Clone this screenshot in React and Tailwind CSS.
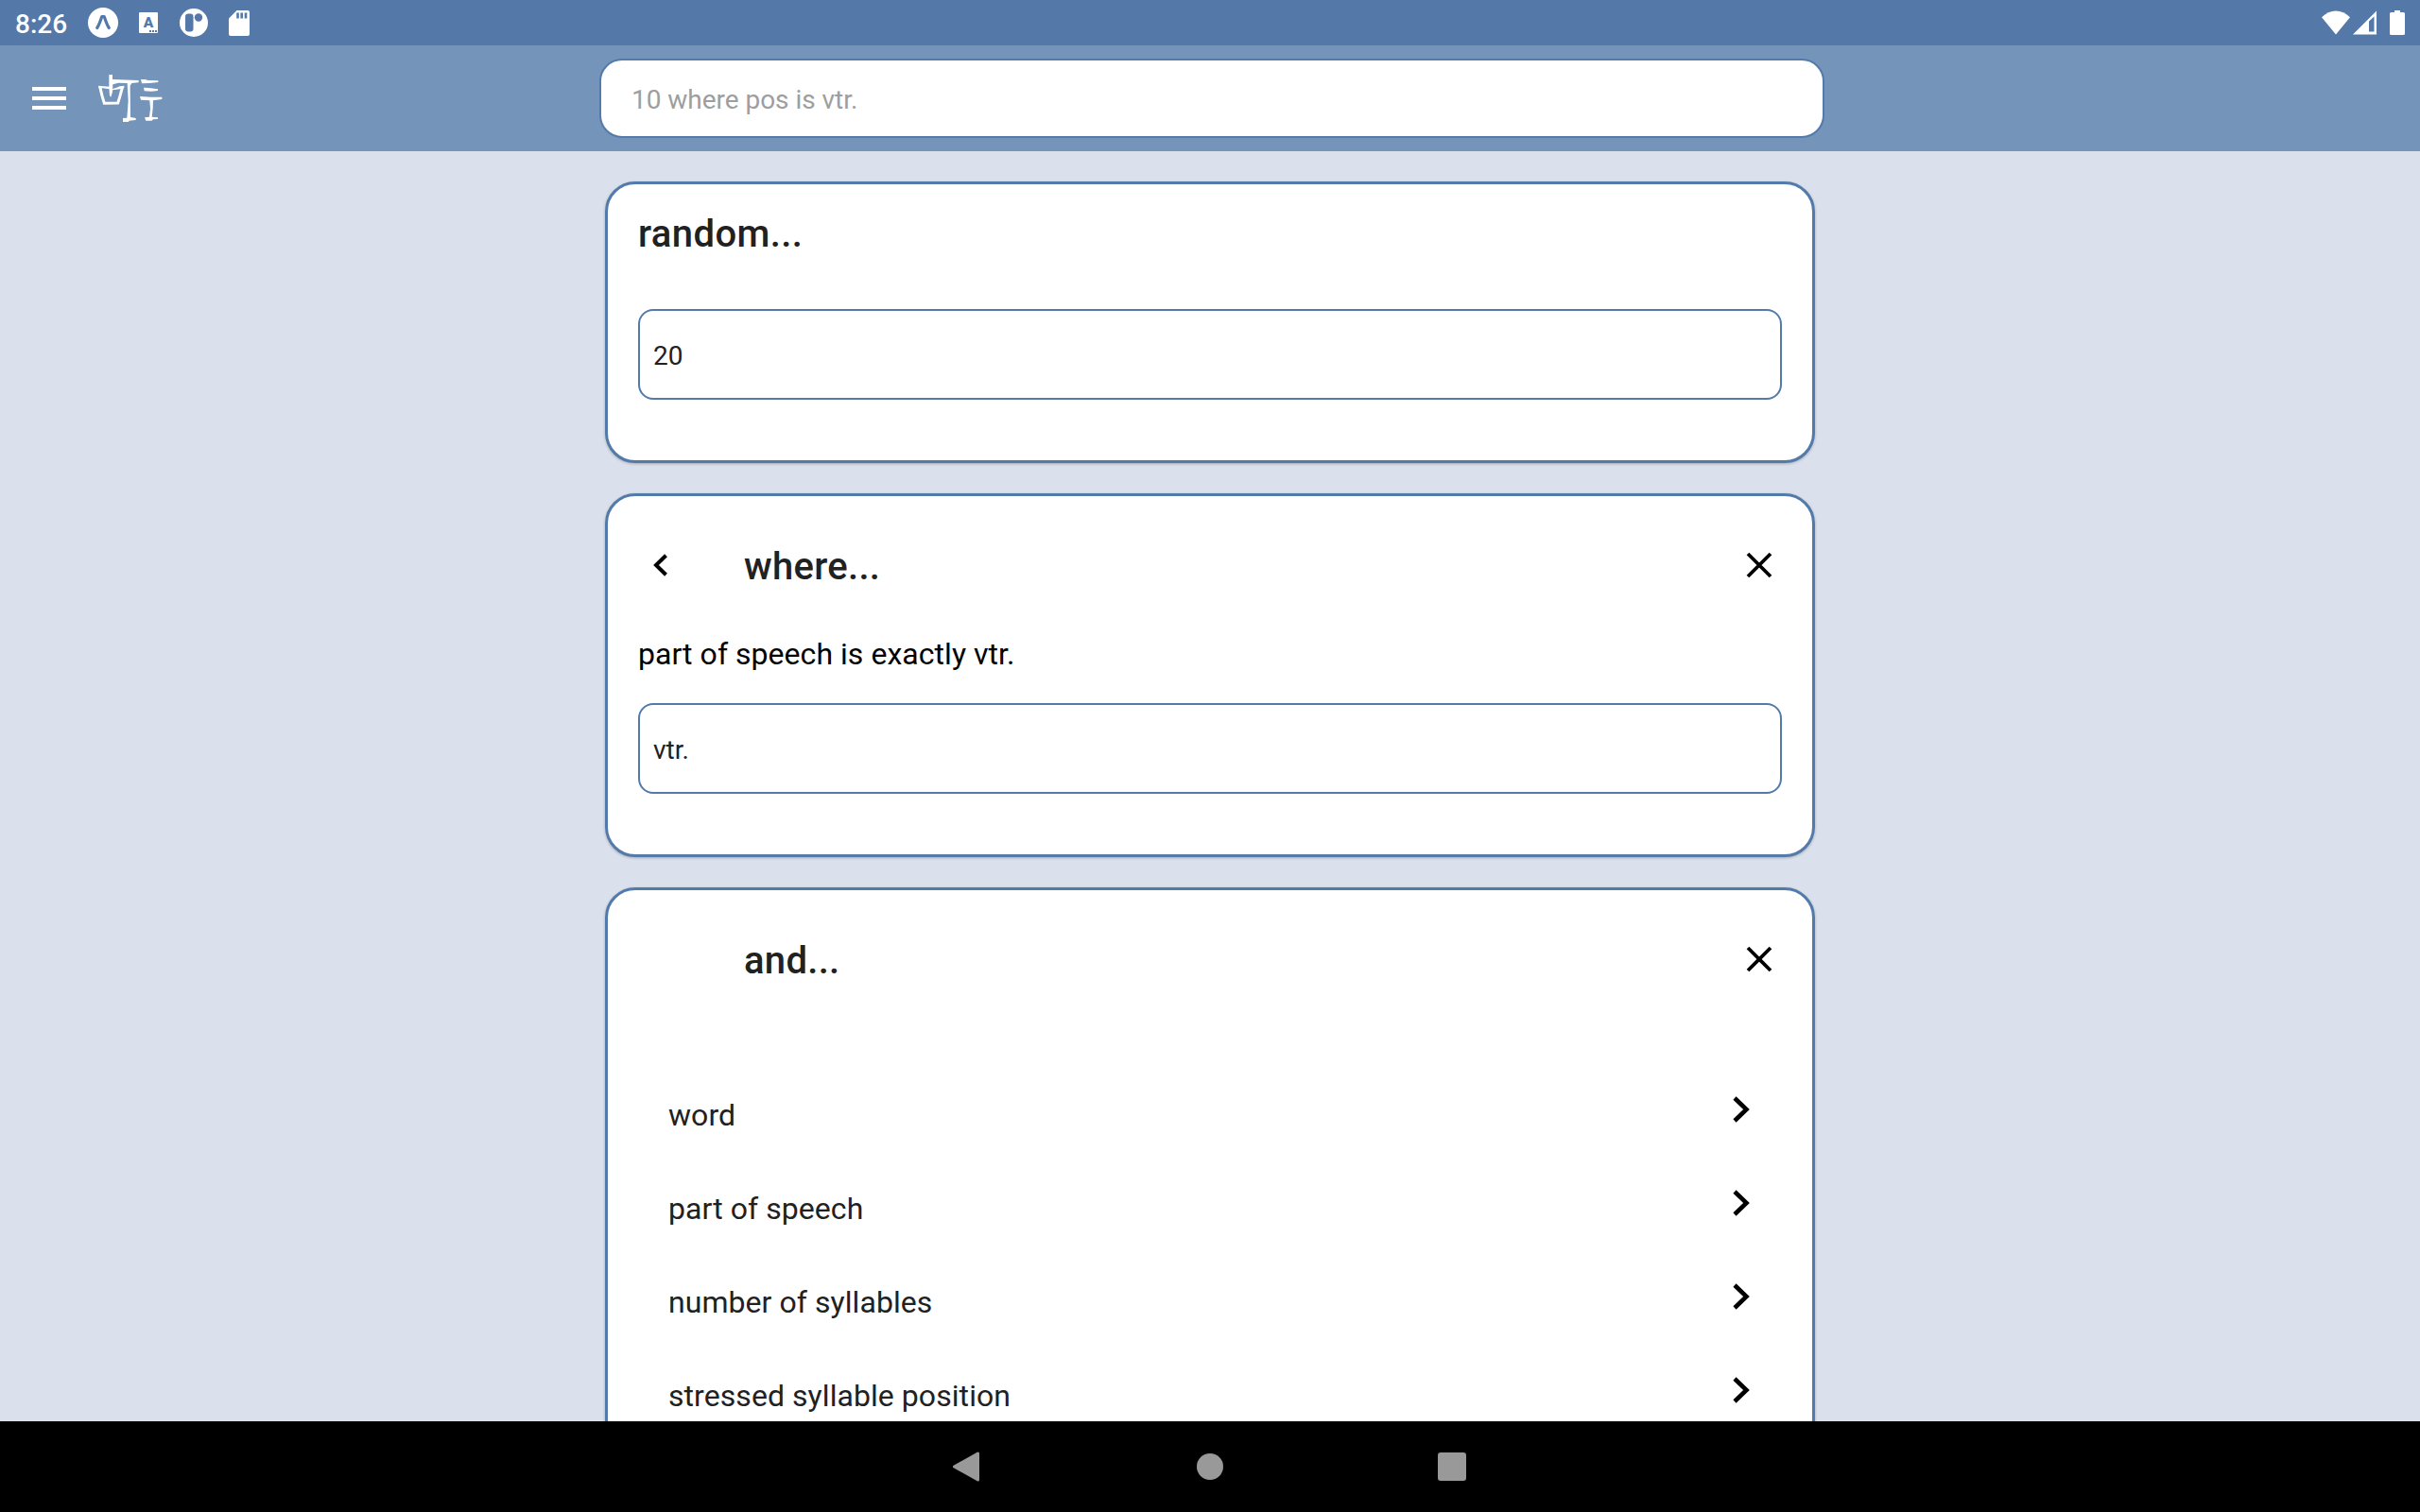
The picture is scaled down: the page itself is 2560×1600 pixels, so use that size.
import React from "react";

function StatusBar() {
  return (
    <div className="flex h-12 shrink-0 items-center bg-[#5479a9] pl-4 pr-4 text-white">
      <span className="w-[77px] pt-[3px] text-[28px] font-medium leading-[32px]">8:26</span>
      <svg className="h-8 w-8" viewBox="0 0 32 32">
        <circle cx="16" cy="16" r="16" fill="#fff" />
        <path d="M9.700 21.500C12 18 13.300 13.500 14.800 9.500H17.200C18.700 13.500 20 18 22.300 21.500" fill="none" stroke="#5479a9" strokeWidth="3.200" strokeLinecap="round" strokeLinejoin="round" />
      </svg>
      <div className="relative ml-[22px] h-[22px] w-5 rounded-[1px] bg-white text-center text-[15.5px] font-black leading-[22px] text-[#5479a9]">
        A
        <div className="absolute bottom-[1px] right-[1px] flex gap-[1px]">
          <i className="h-[2px] w-[2px] bg-[#5479a9]" />
          <i className="h-[2px] w-[2px] bg-[#5479a9]" />
          <i className="h-[2px] w-[2px] bg-[#5479a9]" />
        </div>
      </div>
      <svg className="ml-[23px] h-[30px] w-[30px]" viewBox="0 0 30 30">
        <circle cx="15" cy="15" r="15" fill="#fff" />
        <rect x="6" y="5.500" width="8.500" height="19" rx="3.200" fill="#5479a9" />
        <circle cx="20" cy="9.500" r="4.200" fill="#5479a9" />
      </svg>
      <svg className="ml-[22px] h-[27px] w-[22px]" viewBox="0 0 22 27">
        <path d="M8.500 0H20a2 2 0 0 1 2 2V25a2 2 0 0 1-2 2H2a2 2 0 0 1-2-2V8.500Z" fill="#fff" />
        <path d="M8.200 2.500h2.600v6H8.200zM12.400 2.500H15v6h-2.600zM16.700 2.500h2.600v6h-2.600z" fill="#5479a9" />
      </svg>
      <div className="ml-auto flex items-center">
        <svg className="h-[26px] w-[30px]" viewBox="0 0 30 26">
          <path d="M0 7.300C8.500-1.900 21.500-1.900 30 7.300L15 25.500Z" fill="#fff" />
        </svg>
        <svg className="ml-[3px] h-[26px] w-[25px]" viewBox="0 0 25 26">
          <path fillRule="evenodd" d="M25 .5V25.500H0ZM22.500 6.500 17 11.500V22.500H22.500Z" fill="#fff" />
        </svg>
        <svg className="ml-[14px] h-[26px] w-4" viewBox="0 0 16 26">
          <path d="M5 0h6v2h3.500A1.500 1.500 0 0 1 16 3.500V24.500A1.500 1.500 0 0 1 14.500 26H1.500A1.500 1.500 0 0 1 0 24.500V3.500A1.500 1.500 0 0 1 1.500 2H5Z" fill="#fff" />
        </svg>
      </div>
    </div>
  );
}

function Logo() {
  return (
    <svg className="h-[52px] w-[68px]" viewBox="12 12 204 156" fill="#fff">
      <path d="M46 15H57V30L140 33V40L118 42 113 50 114 150 131 153V159L110 161 108 165H90V153L103 152 107 98 104 42 76 41 58 46 57 70 52 86 48 82 46 56Z" />
      <path d="M17 53 24 82 31 106 74 105 80 86 89 53" fill="none" stroke="#fff" strokeWidth="9" />
      <path d="M12 50 48 53V61L26 58 14 58ZM56 61 70 56 80 52 94 50V57L80 61 57 64Z" />
      <path d="M147 30 160 30 170 33 202 34V39L174 42 150 43ZM156 56 172 57 201 61V66L180 68 158 67ZM144 84 178 86 214 86V93L186 97 185 124 182 149 201 151V156L186 157 182 161H163L159 151 174 149 177 124 175 97 147 95Z" />
    </svg>
  );
}

function Header() {
  return (
    <header className="flex h-28 shrink-0 items-center justify-center bg-[#7494ba]">
      <div className="flex w-[634px] items-center pl-[34px]">
        <div className="flex w-9 flex-col gap-[6px]">
          <span className="h-1 bg-white" />
          <span className="h-1 bg-white" />
          <span className="h-1 bg-white" />
        </div>
        <div className="ml-[34px]">
          <Logo />
        </div>
      </div>
      <div className="flex h-[84px] w-[1296px] items-center rounded-3xl border-2 border-[#527aab] bg-white px-8 text-[28px] text-[#9e9e9e]">
        <span className="pt-[3px] tracking-[-0.03px]">10 where pos is vtr.</span>
      </div>
      <div className="w-[630px]" />
    </header>
  );
}

function Card({ className, children }) {
  return (
    <section className={"shrink-0 rounded-[32px] border-[3px] border-[#527aab] bg-white px-8 shadow-[0_1px_3px_rgba(0,0,0,0.25)] " + className}>
      {children}
    </section>
  );
}

function Field({ value, className }) {
  return (
    <div className={"flex h-24 items-center rounded-2xl border-2 border-[#527aab] px-[14px] text-[28px] text-[#212121] " + className}>
      <span className="pt-1">{value}</span>
    </div>
  );
}

function Close() {
  return (
    <svg className="ml-auto mr-[9px] h-[30px] w-[30px]" viewBox="0 0 30 30">
      <path d="M3 3 27 27M27 3 3 27" stroke="#000" strokeWidth="3.800" />
    </svg>
  );
}

function CardHeader({ title, back }) {
  return (
    <div className="flex h-12 items-center">
      <div className="w-28 pl-4">
        {back && (
          <svg className="h-6 w-4" viewBox="0 0 16 24">
            <path d="M13.500 1.700 3 12 13.500 22.300" fill="none" stroke="#000" strokeWidth="4" />
          </svg>
        )}
      </div>
      <h2 className="pt-1 text-[40px] font-medium leading-[48px] tracking-[0.3px] text-[#212121]">{title}</h2>
      <Close />
    </div>
  );
}

const OPTIONS = ["word", "part of speech", "number of syllables", "stressed syllable position"];

export default function App() {
  return (
    <div className="flex h-[1600px] w-[2560px] flex-col overflow-hidden bg-[#dae1ec] font-['Roboto',sans-serif]">
      <StatusBar />
      <Header />
      <main className="mx-auto flex min-h-0 w-[1280px] flex-1 flex-col gap-8 pt-8">
        <Card className="h-[298px] pt-[23px]">
          <h2 className="text-[40px] font-medium leading-[60px] tracking-[0.4px] text-[#212121]">random...</h2>
          <Field value="20" className="mt-[49px]" />
        </Card>
        <Card className="h-[385px] pt-[49px]">
          <CardHeader title="where..." back />
          <p className="mt-[46px] text-[32px] leading-[48px] tracking-[0.04px] text-black">part of speech is exactly vtr.</p>
          <Field value="vtr." className="mt-[28px]" />
        </Card>
        <Card className="h-[700px] pt-[49px]">
          <CardHeader title="and..." />
          <ul className="mt-[91px] px-8">
            {OPTIONS.map((option) => (
              <li key={option} className="flex h-[99px] items-center justify-between text-[32px] tracking-[0.06px] text-[#212121]">
                <span>{option}</span>
                <svg className="mb-3 mr-[2px] h-7 w-[18px]" viewBox="0 0 18 28">
                  <path d="M2 2 14.500 14 2 26" fill="none" stroke="#000" strokeWidth="4.600" />
                </svg>
              </li>
            ))}
          </ul>
        </Card>
      </main>
      <nav className="z-10 flex h-24 shrink-0 items-center justify-center gap-[227px] bg-black">
        <svg className="-ml-[2px] mr-[2px] h-8 w-[30px]" viewBox="0 0 30 32">
          <path d="M2.500 16 27.500 2V30Z" fill="#999" stroke="#999" strokeWidth="3" strokeLinejoin="round" />
        </svg>
        <svg className="h-7 w-7" viewBox="0 0 28 28">
          <circle cx="14" cy="14" r="14" fill="#999" />
        </svg>
        <div className="h-[30px] w-[30px] rounded-[3px] bg-[#999]" />
      </nav>
    </div>
  );
}
